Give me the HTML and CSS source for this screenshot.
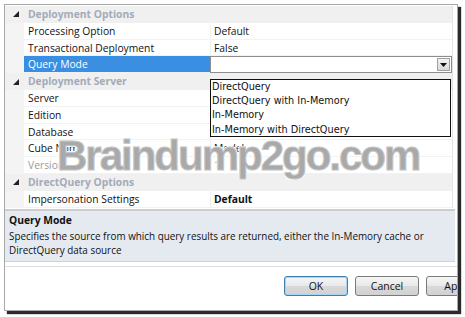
FILE: index.html
```html
<!DOCTYPE html>
<html>
<head>
<meta charset="utf-8">
<link rel="stylesheet" href="styles.css">
</head>
<body>
<div class="frame">
  <div class="grid">
    <div class="row cat"><span class="exp"><svg width="6" height="6" viewBox="0 0 6 6"><polygon points="6,0 6,6 0,6" fill="#222"/></svg></span><span class="cat-label">Deployment Options</span></div>
    <div class="row"><span class="margin"></span><span class="label">Processing Option</span><span class="value">Default</span></div>
    <div class="row"><span class="margin"></span><span class="label">Transactional Deployment</span><span class="value">False</span></div>
    <div class="row"><span class="margin"></span><span class="label selected">Query Mode</span><span class="value combo"><span class="combo-btn"><svg width="7" height="4" viewBox="0 0 7 4"><polygon points="0,0 7,0 3.5,4" fill="#111"/></svg></span></span></div>
    <div class="row cat"><span class="exp"><svg width="6" height="6" viewBox="0 0 6 6"><polygon points="6,0 6,6 0,6" fill="#222"/></svg></span><span class="cat-label">Deployment Server</span></div>
    <div class="row"><span class="margin"></span><span class="label">Server</span><span class="value"></span></div>
    <div class="row"><span class="margin"></span><span class="label">Edition</span><span class="value"></span></div>
    <div class="row"><span class="margin"></span><span class="label">Database</span><span class="value"></span></div>
    <div class="row"><span class="margin"></span><span class="label">Cube Name</span><span class="value">Model</span></div>
    <div class="row"><span class="margin"></span><span class="label dim">Version</span><span class="value dim">11</span></div>
    <div class="row cat"><span class="exp"><svg width="6" height="6" viewBox="0 0 6 6"><polygon points="6,0 6,6 0,6" fill="#222"/></svg></span><span class="cat-label">DirectQuery Options</span></div>
    <div class="row"><span class="margin"></span><span class="label">Impersonation Settings</span><span class="value bold">Default</span></div>
  </div>
  <div class="desc">
    <div class="desc-title">Query Mode</div>
    <div class="desc-text">Specifies the source from which query results are returned, either the In-Memory cache or DirectQuery data source</div>
  </div>
  <div class="buttons">
    <button class="btn default">OK</button>
    <button class="btn">Cancel</button>
    <button class="btn">Apply</button>
  </div>
  <ul class="droplist">
    <li>DirectQuery</li>
    <li>DirectQuery with In-Memory</li>
    <li>In-Memory</li>
    <li>In-Memory with DirectQuery</li>
  </ul>
  <div class="watermark">Braindump2go.com</div>
</div>
</body>
</html>
```
FILE: styles.css
```css
html, body {
  margin: 0;
  padding: 0;
  background: #fff;
  width: 465px;
  height: 317px;
  overflow: hidden;
}
.frame {
  position: relative;
  margin: 4px 0 0 4px;
  width: 452px;
  height: 305px;
  border: 1px solid #a8a8a8;
  box-shadow: 3px 3px 1px #2a2a2a;
  background: #fff;
  overflow: hidden;
  font-family: "Open Sans", "Noto Sans", sans-serif;
  font-size: 10.3px;
  color: #111;
}
.grid {
  margin-top: 1px;
  width: 447px;
  border-right: 1px solid #e4e4e4;
}
.row {
  display: grid;
  grid-template-columns: 19px 186px 1fr;
  height: 16.8px;
  line-height: 16.8px;
  box-sizing: border-box;
}
.row .margin {
  background: #f4f4f4;
}
.row .label {
  padding-left: 4px;
  border-bottom: 1px solid #f2f2f2;
  white-space: nowrap;
  overflow: hidden;
}
.row .value {
  padding-left: 3px;
  border-bottom: 1px solid #f2f2f2;
  border-left: 1px solid #f0f0f0;
  white-space: nowrap;
  overflow: hidden;
}
.label.selected {
  background: #3a8fe3;
  color: #fff;
}
.dim {
  color: #9a9a9a;
}
.bold {
  font-weight: 700;
}
.cat {
  background: #f0f0f0;
}
.cat .exp {
  display: flex;
  align-items: center;
  justify-content: center;
  padding-left: 2px;
}
.cat-label {
  grid-column: 2 / 4;
  padding-left: 4px;
  font-weight: 700;
  color: #a3abb8;
}
.value.combo {
  display: flex;
  justify-content: flex-end;
  align-items: center;
  background: #fff;
  border: 1px solid #8d8d8d;
  padding: 0 1px 0 0;
}
.combo-btn {
  width: 13px;
  height: 13px;
  display: flex;
  align-items: center;
  justify-content: center;
  background: linear-gradient(#f4f4f4, #d8d8d8);
  border: 1px solid #a0a0a0;
  box-sizing: border-box;
}
.desc {
  margin-top: 1px;
  width: 450px;
  height: 53px;
  box-sizing: border-box;
  border-top: 2px solid #cdcdcd;
  border-bottom: 1px solid #cdd3dc;
  background: #e5eaf1;
  padding: 3px 4px;
  font-size: 9.9px;
  line-height: 13.5px;
}
.desc-title {
  font-weight: 700;
  font-size: 10.3px;
  margin-bottom: 3px;
}
.buttons {
  margin-top: 4px;
  border-top: 1px solid #dedede;
  display: flex;
  gap: 7px;
  padding: 9px 0 0 279px;
  width: 600px;
}
.btn {
  flex: none;
  width: 64px;
  height: 20px;
  font-family: "Open Sans", "Noto Sans", sans-serif;
  font-size: 10.5px;
  color: #111;
  border: 1px solid #7a7a7a;
  border-radius: 3px;
  background: linear-gradient(#f6f6f6 0%, #e8e8e8 50%, #d9d9d9 51%, #d2d2d2 100%);
  padding: 0;
}
.btn.default {
  border-color: #3c7fb1;
  box-shadow: inset 0 0 0 1px #a6d4f2;
}
.droplist {
  position: absolute;
  left: 205px;
  top: 74px;
  width: 241px;
  height: 58px;
  box-sizing: border-box;
  margin: 0;
  padding: 0 0 0 1px;
  list-style: none;
  background: #fff;
  border: 1px solid #111;
  font-family: "DejaVu Sans Condensed", "DejaVu Sans", sans-serif;
  font-size: 10.8px;
  line-height: 14.2px;
}
.watermark {
  position: absolute;
  left: 52px;
  top: 127px;
  font-family: "Liberation Sans", Arial, sans-serif;
  font-weight: 700;
  font-size: 42px;
  letter-spacing: -2px;
  color: #a9a9a9;
  -webkit-text-stroke: 1px #c4c4c4;
  text-shadow: 1px 1px 0 #fff, -1px -1px 0 #fff, 1px -1px 0 #fff, -1px 1px 0 #fff;
  white-space: nowrap;
  pointer-events: none;
}
```
